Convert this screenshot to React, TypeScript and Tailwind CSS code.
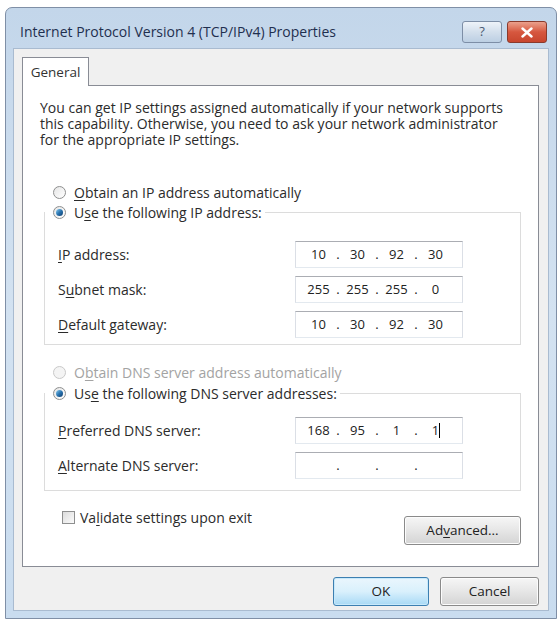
import React from "react";

// Win7-style "Internet Protocol Version 4 (TCP/IPv4) Properties" dialog

const font = { fontFamily: '"Open Sans", "Liberation Sans", Arial, sans-serif' };

function Key({ children }: { children: React.ReactNode }) {
  return <span className="underline underline-offset-2">{children}</span>;
}

function Radio({ checked, disabled }: { checked?: boolean; disabled?: boolean }) {
  return (
    <span
      className={`flex h-[13px] w-[13px] shrink-0 items-center justify-center rounded-full border ${
        disabled ? "border-[#c9c9c9] bg-[#f4f4f4]" : "border-[#8e8f8f] bg-gradient-to-br from-[#e6e6e6] to-[#ffffff]"
      }`}
    >
      {checked && (
        <span className="h-[7px] w-[7px] rounded-full bg-gradient-to-br from-[#8ad0f2] via-[#2a74b0] to-[#0d3d6e]" />
      )}
    </span>
  );
}

function IpBox({ parts, cursor }: { parts: string[]; cursor?: boolean }) {
  return (
    <div className="flex h-[27px] w-[168px] items-center border border-[#dbdfe6] border-t-[#abadb3] border-b-[#e3e9ef] bg-white pl-[6px] text-[13px] text-[#222]">
      {parts.map((p, i) => (
        <React.Fragment key={i}>
          <span className="relative w-[33px] text-center">
            {p}
            {cursor && i === 3 && (
              <span className="absolute top-[2px] left-[20px] h-[15px] w-px bg-black" />
            )}
          </span>
          {i < 3 && <span className="w-[6px] text-center">.</span>}
        </React.Fragment>
      ))}
    </div>
  );
}

function FieldRow({ label, parts, cursor }: { label: React.ReactNode; parts: string[]; cursor?: boolean }) {
  return (
    <div className="flex items-center">
      <span className="w-[250px] pl-[13px]">{label}</span>
      <IpBox parts={parts} cursor={cursor} />
    </div>
  );
}

function WinButton({ children, primary, className = "" }: { children: React.ReactNode; primary?: boolean; className?: string }) {
  return (
    <div
      className={`flex h-[29px] items-center justify-center rounded-[3px] border text-[13.5px] text-[#222] ${
        primary
          ? "border-[#3c7fb1] bg-gradient-to-b from-[#eaf6fd] via-[#d9f0fc] to-[#a7d9f5] shadow-[inset_0_0_0_1px_#c7e9fb]"
          : "border-[#8a8a8a] bg-gradient-to-b from-[#f6f6f6] via-[#e6e6e6] to-[#d4d4d4] shadow-[inset_0_0_0_1px_#fcfcfc]"
      } ${className}`}
    >
      {children}
    </div>
  );
}

export default function App() {
  return (
    <div className="min-h-screen bg-white pt-[7px] pl-[5px] text-[14px] text-[#2b2b2b]" style={font}>
      <div className="flex h-[612px] w-[552px] flex-col rounded-t-[7px] border border-[#7f8fa6] bg-gradient-to-b from-[#c3d6ea] via-[#d3e2f1] to-[#c9dcef]">
        {/* Title bar */}
        <div className="flex h-[40px] shrink-0 items-start pl-[14px] pr-[9px]">
          <span className="mt-[13px] flex-1 whitespace-nowrap text-[#1f2f4f]">
            Internet Protocol Version 4 (TCP/IPv4) Properties
          </span>
          <div className="mt-[13px] flex gap-[5px]">
            <div className="flex h-[22px] w-[40px] items-center justify-center rounded-[3px] border border-[#7d8ea6] bg-gradient-to-b from-[#eef3f9] via-[#d3dfec] to-[#bccfe3] text-[13px] text-[#4a5a72]">
              ?
            </div>
            <div className="flex h-[22px] w-[40px] items-center justify-center rounded-[3px] border border-[#8a3a2c] bg-gradient-to-b from-[#eaa08c] via-[#d6573f] to-[#c8462e]">
              <svg width="12" height="11" viewBox="0 0 12 11">
                <path d="M1.5 1.5 L10.5 9.5 M10.5 1.5 L1.5 9.5" stroke="#fff" strokeWidth="2.4" strokeLinecap="round" />
              </svg>
            </div>
          </div>
        </div>

        {/* Client area */}
        <div className="mx-[7px] mb-[7px] flex flex-1 flex-col border border-[#a9bbd0] bg-[#f0f0f0] pt-[8px] pl-[8px]">
          {/* Tab */}
          <div className="relative z-10 -mb-px flex h-[29px] w-[67px] items-center justify-center border border-b-0 border-[#898c95] bg-white text-[13.5px] text-[#333]">
            General
          </div>

          {/* Tab panel */}
          <div className="flex h-[482px] w-[517px] flex-col border border-[#898c95] bg-white px-[17px] pt-[14px]">
            <p className="whitespace-nowrap leading-[16px]">
              You can get IP settings assigned automatically if your network supports
              <br />
              this capability. Otherwise, you need to ask your network administrator
              <br />
              for the appropriate IP settings.
            </p>

            <div className="mt-[34px] flex h-[20px] items-center gap-[8px] pl-[13px]">
              <Radio />
              <span>
                <Key>O</Key>btain an IP address automatically
              </span>
            </div>

            <div className="mt-[10px] ml-[4px] flex w-[477px] flex-col gap-[8px] border border-[#dcdcdc] pb-[6px]">
              <div className="-mt-[11px] mb-[11px] flex h-[20px] items-center gap-[8px] self-start bg-white pr-[3px] pl-[8px]">
                <Radio checked />
                <span>
                  U<Key>s</Key>e the following IP address:
                </span>
              </div>
              <FieldRow label={<><Key>I</Key>P address:</>} parts={["10", "30", "92", "30"]} />
              <FieldRow label={<>S<Key>u</Key>bnet mask:</>} parts={["255", "255", "255", "0"]} />
              <FieldRow label={<><Key>D</Key>efault gateway:</>} parts={["10", "30", "92", "30"]} />
            </div>

            <div className="mt-[17px] flex h-[20px] items-center gap-[8px] pl-[13px] text-[#a3a3a3]">
              <Radio disabled />
              <span>
                O<Key>b</Key>tain DNS server address automatically
              </span>
            </div>

            <div className="mt-[11px] ml-[4px] flex w-[477px] flex-col gap-[8px] border border-[#dcdcdc] pb-[11px]">
              <div className="-mt-[11px] mb-[6px] flex h-[20px] items-center gap-[8px] self-start bg-white pr-[3px] pl-[8px]">
                <Radio checked />
                <span>
                  Us<Key>e</Key> the following DNS server addresses:
                </span>
              </div>
              <FieldRow label={<><Key>P</Key>referred DNS server:</>} parts={["168", "95", "1", "1"]} cursor />
              <FieldRow label={<><Key>A</Key>lternate DNS server:</>} parts={["", "", "", ""]} />
            </div>

            <div className="mt-[18px] ml-[4px] flex w-[477px] items-start justify-between">
              <div className="ml-[18px] flex h-[16px] items-center gap-[5px]">
                <span className="h-[13px] w-[13px] border border-[#8e8f8f] bg-gradient-to-br from-[#dcdcdc] to-[#fbfbfb]" />
                <span>
                  Va<Key>l</Key>idate settings upon exit
                </span>
              </div>
              <WinButton className="mt-[7px] w-[117px]">
                Ad<Key>v</Key>anced...
              </WinButton>
            </div>
          </div>

          {/* Dialog buttons */}
          <div className="mt-[10px] flex justify-end gap-[11px] pr-[9px]">
            <WinButton primary className="w-[96px]">
              OK
            </WinButton>
            <WinButton className="w-[99px]">Cancel</WinButton>
          </div>
        </div>
      </div>
    </div>
  );
}
